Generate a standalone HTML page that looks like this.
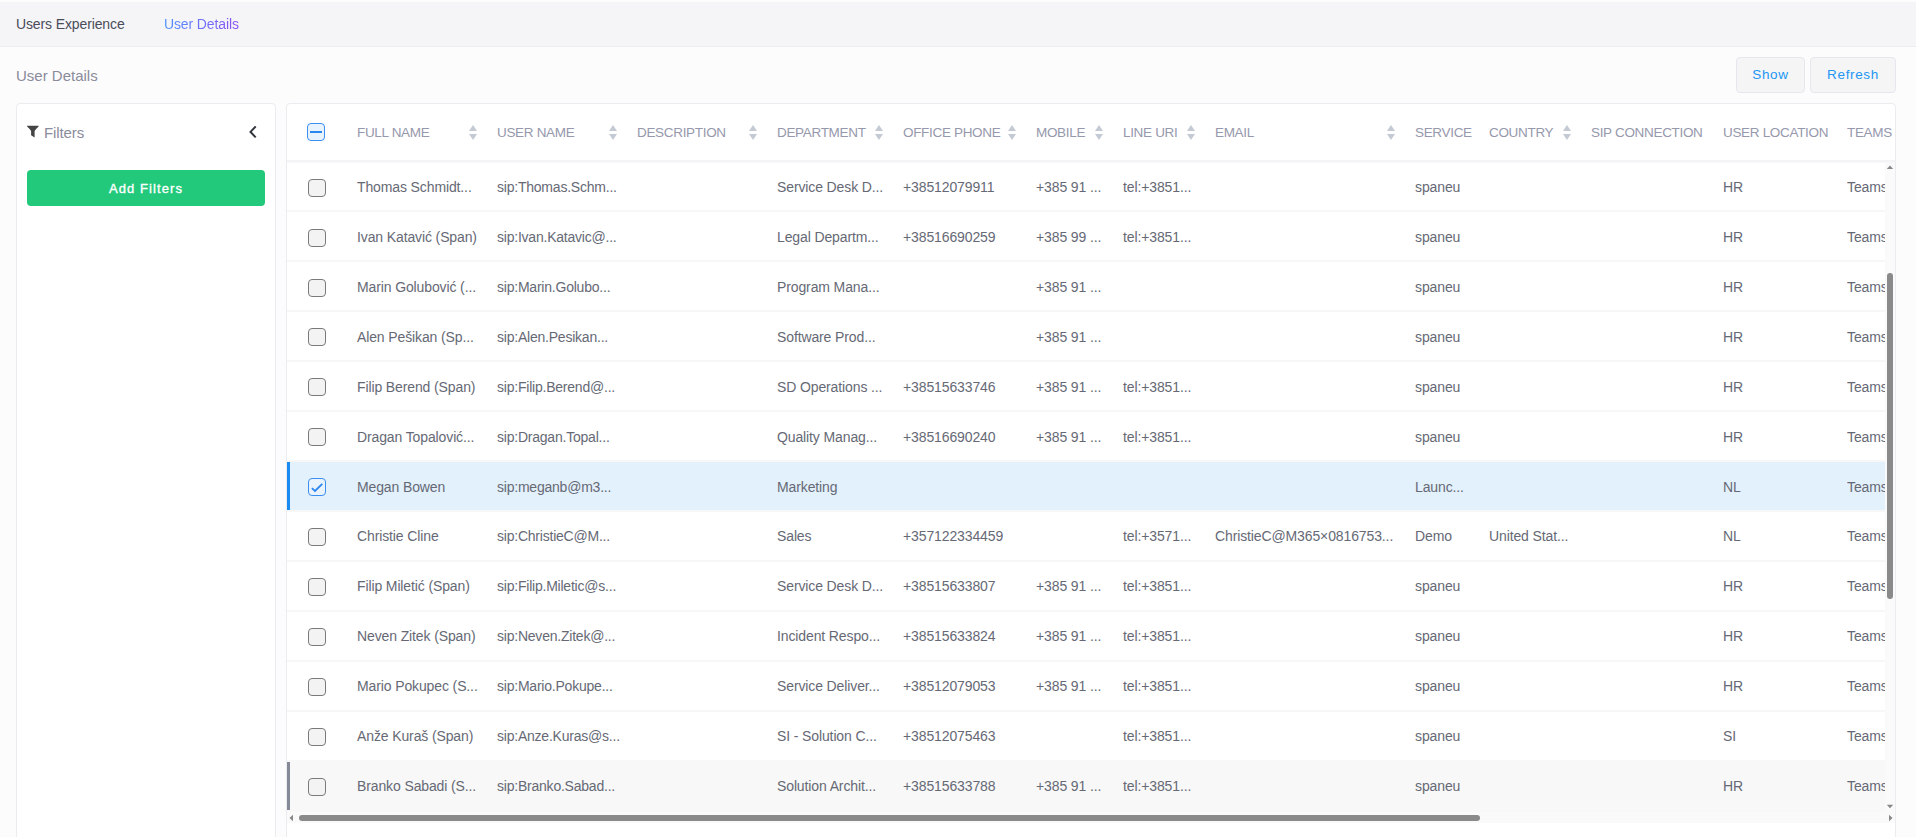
<!DOCTYPE html><html><head><meta charset="utf-8"><style>
*{margin:0;padding:0;box-sizing:border-box}
html,body{width:1916px;height:837px;overflow:hidden;background:#fcfcfd;font-family:"Liberation Sans",sans-serif}
.a{position:absolute;white-space:nowrap}
#top{position:absolute;left:0;top:2px;width:1916px;height:45px;background:#f5f5f8;border-bottom:1px solid #ebebf0}
.tab1{left:16px;top:15px;font-size:14px;letter-spacing:-0.12px;line-height:18px;color:#4a4c59}
.tab2{left:164px;top:15px;font-size:14px;letter-spacing:-0.12px;line-height:18px;background:linear-gradient(90deg,#4d94ff,#8c4ef2);-webkit-background-clip:text;background-clip:text;color:transparent}
.h1{left:16px;top:67px;font-size:15px;line-height:18px;color:#8a8b9b}
.btn{position:absolute;top:57px;height:36px;background:#f5f5f6;border:1px solid #e6e6ee;border-radius:4px;color:#2196f3;font-size:13.5px;letter-spacing:0.65px;text-align:center;line-height:34px}
.panel{position:absolute;background:#fff;border:1px solid #ebebf0;border-radius:4px}
.filt{left:44px;top:124px;font-size:15px;letter-spacing:-0.1px;line-height:18px;color:#8a8b9b}
.add{position:absolute;left:27px;top:170px;width:238px;height:36px;background:#22c97b;border-radius:4px;color:#fff;font-size:13px;letter-spacing:1.1px;-webkit-text-stroke:0.35px #fff;text-align:center;line-height:37px}
.hd{font-size:13.5px;letter-spacing:-0.32px;line-height:18px;color:#9698ac;top:124px}
.cell{font-size:14px;letter-spacing:-0.12px;line-height:20px;color:#666975}
.sort{position:absolute;width:8px;height:15px}
.cb{position:absolute;left:308px;width:18px;height:18px;border:1.5px solid #7a7a7a;border-radius:4px;background:#f3f3f3}
.sep{position:absolute;left:287px;width:1598px;height:2px;background:#f7f7f8}
</style></head><body>
<div id="top"></div>
<div class="a tab1">Users Experience</div>
<div class="a tab2">User Details</div>
<div class="a h1">User Details</div>
<div class="btn" style="left:1736px;width:69px">Show</div>
<div class="btn" style="left:1810px;width:86px">Refresh</div>
<div class="panel" style="left:16px;top:103px;width:260px;height:760px"></div>
<svg class="a" style="left:27px;top:125px" width="12" height="13" viewBox="0 0 12 13"><path d="M0.1 0.8 H11.6 V1.6 Q8.6 4.4 7.6 6 V12.6 L4.1 10.2 V6 Q3.1 4.4 0.1 1.6 Z" fill="#444"/></svg>
<div class="a filt">Filters</div>
<svg class="a" style="left:247px;top:124px" width="12" height="16" viewBox="0 0 12 16"><path d="M8.7 2.4 L3.5 7.9 L8.7 13.4" fill="none" stroke="#30343a" stroke-width="2"/></svg>
<div class="add">Add Filters</div>
<div class="panel" style="left:286px;top:103px;width:1610px;height:760px"></div>
<div class="a" style="left:287px;top:160px;width:1608px;height:2px;background:#f4f4f7"></div><div class="a" style="left:287px;top:162px;width:1608px;height:1px;background:#f8f8f8"></div>
<div class="a" style="left:307px;top:123px;width:18px;height:18px;border:1.5px solid #3b8ff0;border-radius:4px;background:#e8f3fd"></div>
<div class="a" style="left:310px;top:131px;width:12px;height:2px;background:#2b86ee"></div>
<div class="a hd" style="left:357px">FULL NAME</div>
<svg class="a" style="left:469px;top:125px" width="8" height="15" viewBox="0 0 8 15"><path d="M4 0 L8 6 H0 Z M0 9 H8 L4 15 Z" fill="#c4cad3"/></svg>
<div class="a hd" style="left:497px">USER NAME</div>
<svg class="a" style="left:609px;top:125px" width="8" height="15" viewBox="0 0 8 15"><path d="M4 0 L8 6 H0 Z M0 9 H8 L4 15 Z" fill="#c4cad3"/></svg>
<div class="a hd" style="left:637px">DESCRIPTION</div>
<svg class="a" style="left:749px;top:125px" width="8" height="15" viewBox="0 0 8 15"><path d="M4 0 L8 6 H0 Z M0 9 H8 L4 15 Z" fill="#c4cad3"/></svg>
<div class="a hd" style="left:777px">DEPARTMENT</div>
<svg class="a" style="left:875px;top:125px" width="8" height="15" viewBox="0 0 8 15"><path d="M4 0 L8 6 H0 Z M0 9 H8 L4 15 Z" fill="#c4cad3"/></svg>
<div class="a hd" style="left:903px">OFFICE PHONE</div>
<svg class="a" style="left:1008px;top:125px" width="8" height="15" viewBox="0 0 8 15"><path d="M4 0 L8 6 H0 Z M0 9 H8 L4 15 Z" fill="#c4cad3"/></svg>
<div class="a hd" style="left:1036px">MOBILE</div>
<svg class="a" style="left:1095px;top:125px" width="8" height="15" viewBox="0 0 8 15"><path d="M4 0 L8 6 H0 Z M0 9 H8 L4 15 Z" fill="#c4cad3"/></svg>
<div class="a hd" style="left:1123px">LINE URI</div>
<svg class="a" style="left:1187px;top:125px" width="8" height="15" viewBox="0 0 8 15"><path d="M4 0 L8 6 H0 Z M0 9 H8 L4 15 Z" fill="#c4cad3"/></svg>
<div class="a hd" style="left:1215px">EMAIL</div>
<svg class="a" style="left:1387px;top:125px" width="8" height="15" viewBox="0 0 8 15"><path d="M4 0 L8 6 H0 Z M0 9 H8 L4 15 Z" fill="#c4cad3"/></svg>
<div class="a hd" style="left:1415px">SERVICE</div>
<div class="a hd" style="left:1489px">COUNTRY</div>
<svg class="a" style="left:1563px;top:125px" width="8" height="15" viewBox="0 0 8 15"><path d="M4 0 L8 6 H0 Z M0 9 H8 L4 15 Z" fill="#c4cad3"/></svg>
<div class="a hd" style="left:1591px">SIP CONNECTION</div>
<div class="a hd" style="left:1723px">USER LOCATION</div>
<div class="a hd" style="left:1847px">TEAMS</div>
<div class="sep" style="top:210px"></div>
<div class="cb" style="top:179px"></div>
<div class="a cell" style="left:357px;top:177px;">Thomas Schmidt...</div>
<div class="a cell" style="left:497px;top:177px;letter-spacing:-0.22px;">sip:Thomas.Schm...</div>
<div class="a cell" style="left:777px;top:177px;">Service Desk D...</div>
<div class="a cell" style="left:903px;top:177px;">+38512079911</div>
<div class="a cell" style="left:1036px;top:177px;">+385 91 ...</div>
<div class="a cell" style="left:1123px;top:177px;">tel:+3851...</div>
<div class="a cell" style="left:1415px;top:177px;">spaneu</div>
<div class="a cell" style="left:1723px;top:177px;">HR</div>
<div class="a cell" style="left:1847px;top:177px;width:38px;overflow:hidden;">Teams</div>
<div class="sep" style="top:260px"></div>
<div class="cb" style="top:229px"></div>
<div class="a cell" style="left:357px;top:227px;">Ivan Katavić (Span)</div>
<div class="a cell" style="left:497px;top:227px;letter-spacing:-0.22px;">sip:Ivan.Katavic@...</div>
<div class="a cell" style="left:777px;top:227px;">Legal Departm...</div>
<div class="a cell" style="left:903px;top:227px;">+38516690259</div>
<div class="a cell" style="left:1036px;top:227px;">+385 99 ...</div>
<div class="a cell" style="left:1123px;top:227px;">tel:+3851...</div>
<div class="a cell" style="left:1415px;top:227px;">spaneu</div>
<div class="a cell" style="left:1723px;top:227px;">HR</div>
<div class="a cell" style="left:1847px;top:227px;width:38px;overflow:hidden;">Teams</div>
<div class="sep" style="top:310px"></div>
<div class="cb" style="top:279px"></div>
<div class="a cell" style="left:357px;top:277px;">Marin Golubović (...</div>
<div class="a cell" style="left:497px;top:277px;letter-spacing:-0.22px;">sip:Marin.Golubo...</div>
<div class="a cell" style="left:777px;top:277px;">Program Mana...</div>
<div class="a cell" style="left:1036px;top:277px;">+385 91 ...</div>
<div class="a cell" style="left:1415px;top:277px;">spaneu</div>
<div class="a cell" style="left:1723px;top:277px;">HR</div>
<div class="a cell" style="left:1847px;top:277px;width:38px;overflow:hidden;">Teams</div>
<div class="sep" style="top:360px"></div>
<div class="cb" style="top:328px"></div>
<div class="a cell" style="left:357px;top:327px;">Alen Pešikan (Sp...</div>
<div class="a cell" style="left:497px;top:327px;letter-spacing:-0.22px;">sip:Alen.Pesikan...</div>
<div class="a cell" style="left:777px;top:327px;">Software Prod...</div>
<div class="a cell" style="left:1036px;top:327px;">+385 91 ...</div>
<div class="a cell" style="left:1415px;top:327px;">spaneu</div>
<div class="a cell" style="left:1723px;top:327px;">HR</div>
<div class="a cell" style="left:1847px;top:327px;width:38px;overflow:hidden;">Teams</div>
<div class="sep" style="top:410px"></div>
<div class="cb" style="top:378px"></div>
<div class="a cell" style="left:357px;top:377px;">Filip Berend (Span)</div>
<div class="a cell" style="left:497px;top:377px;letter-spacing:-0.22px;">sip:Filip.Berend@...</div>
<div class="a cell" style="left:777px;top:377px;">SD Operations ...</div>
<div class="a cell" style="left:903px;top:377px;">+38515633746</div>
<div class="a cell" style="left:1036px;top:377px;">+385 91 ...</div>
<div class="a cell" style="left:1123px;top:377px;">tel:+3851...</div>
<div class="a cell" style="left:1415px;top:377px;">spaneu</div>
<div class="a cell" style="left:1723px;top:377px;">HR</div>
<div class="a cell" style="left:1847px;top:377px;width:38px;overflow:hidden;">Teams</div>
<div class="sep" style="top:460px"></div>
<div class="cb" style="top:428px"></div>
<div class="a cell" style="left:357px;top:427px;">Dragan Topalović...</div>
<div class="a cell" style="left:497px;top:427px;letter-spacing:-0.22px;">sip:Dragan.Topal...</div>
<div class="a cell" style="left:777px;top:427px;">Quality Manag...</div>
<div class="a cell" style="left:903px;top:427px;">+38516690240</div>
<div class="a cell" style="left:1036px;top:427px;">+385 91 ...</div>
<div class="a cell" style="left:1123px;top:427px;">tel:+3851...</div>
<div class="a cell" style="left:1415px;top:427px;">spaneu</div>
<div class="a cell" style="left:1723px;top:427px;">HR</div>
<div class="a cell" style="left:1847px;top:427px;width:38px;overflow:hidden;">Teams</div>
<div class="a" style="left:287px;top:462px;width:1598px;height:48px;background:#e3f1fc"></div>
<div class="a" style="left:287px;top:462px;width:3px;height:48px;background:#1a8bf0"></div>
<div class="sep" style="top:510px"></div>
<div class="cb" style="top:478px;border-color:#3b8ff0;background:#e8f3fd"></div>
<svg class="a" style="left:308px;top:478px" width="18" height="18" viewBox="0 0 18 18"><path d="M3.9 10.2 L7 13 L14.3 5.8" fill="none" stroke="#2b86ee" stroke-width="1.8"/></svg>
<div class="a cell" style="left:357px;top:477px;">Megan Bowen</div>
<div class="a cell" style="left:497px;top:477px;letter-spacing:-0.22px;">sip:meganb@m3...</div>
<div class="a cell" style="left:777px;top:477px;">Marketing</div>
<div class="a cell" style="left:1415px;top:477px;">Launc...</div>
<div class="a cell" style="left:1723px;top:477px;">NL</div>
<div class="a cell" style="left:1847px;top:477px;width:38px;overflow:hidden;">Teams</div>
<div class="sep" style="top:560px"></div>
<div class="cb" style="top:528px"></div>
<div class="a cell" style="left:357px;top:526px;">Christie Cline</div>
<div class="a cell" style="left:497px;top:526px;letter-spacing:-0.22px;">sip:ChristieC@M...</div>
<div class="a cell" style="left:777px;top:526px;">Sales</div>
<div class="a cell" style="left:903px;top:526px;">+357122334459</div>
<div class="a cell" style="left:1123px;top:526px;">tel:+3571...</div>
<div class="a cell" style="left:1215px;top:526px;">ChristieC@M365×0816753...</div>
<div class="a cell" style="left:1415px;top:526px;">Demo</div>
<div class="a cell" style="left:1489px;top:526px;">United Stat...</div>
<div class="a cell" style="left:1723px;top:526px;">NL</div>
<div class="a cell" style="left:1847px;top:526px;width:38px;overflow:hidden;">Teams</div>
<div class="sep" style="top:610px"></div>
<div class="cb" style="top:578px"></div>
<div class="a cell" style="left:357px;top:576px;">Filip Miletić (Span)</div>
<div class="a cell" style="left:497px;top:576px;letter-spacing:-0.22px;">sip:Filip.Miletic@s...</div>
<div class="a cell" style="left:777px;top:576px;">Service Desk D...</div>
<div class="a cell" style="left:903px;top:576px;">+38515633807</div>
<div class="a cell" style="left:1036px;top:576px;">+385 91 ...</div>
<div class="a cell" style="left:1123px;top:576px;">tel:+3851...</div>
<div class="a cell" style="left:1415px;top:576px;">spaneu</div>
<div class="a cell" style="left:1723px;top:576px;">HR</div>
<div class="a cell" style="left:1847px;top:576px;width:38px;overflow:hidden;">Teams</div>
<div class="sep" style="top:660px"></div>
<div class="cb" style="top:628px"></div>
<div class="a cell" style="left:357px;top:626px;">Neven Zitek (Span)</div>
<div class="a cell" style="left:497px;top:626px;letter-spacing:-0.22px;">sip:Neven.Zitek@...</div>
<div class="a cell" style="left:777px;top:626px;">Incident Respo...</div>
<div class="a cell" style="left:903px;top:626px;">+38515633824</div>
<div class="a cell" style="left:1036px;top:626px;">+385 91 ...</div>
<div class="a cell" style="left:1123px;top:626px;">tel:+3851...</div>
<div class="a cell" style="left:1415px;top:626px;">spaneu</div>
<div class="a cell" style="left:1723px;top:626px;">HR</div>
<div class="a cell" style="left:1847px;top:626px;width:38px;overflow:hidden;">Teams</div>
<div class="sep" style="top:710px"></div>
<div class="cb" style="top:678px"></div>
<div class="a cell" style="left:357px;top:676px;">Mario Pokupec (S...</div>
<div class="a cell" style="left:497px;top:676px;letter-spacing:-0.22px;">sip:Mario.Pokupe...</div>
<div class="a cell" style="left:777px;top:676px;">Service Deliver...</div>
<div class="a cell" style="left:903px;top:676px;">+38512079053</div>
<div class="a cell" style="left:1036px;top:676px;">+385 91 ...</div>
<div class="a cell" style="left:1123px;top:676px;">tel:+3851...</div>
<div class="a cell" style="left:1415px;top:676px;">spaneu</div>
<div class="a cell" style="left:1723px;top:676px;">HR</div>
<div class="a cell" style="left:1847px;top:676px;width:38px;overflow:hidden;">Teams</div>
<div class="sep" style="top:760px"></div>
<div class="cb" style="top:728px"></div>
<div class="a cell" style="left:357px;top:726px;">Anže Kuraš (Span)</div>
<div class="a cell" style="left:497px;top:726px;letter-spacing:-0.22px;">sip:Anze.Kuras@s...</div>
<div class="a cell" style="left:777px;top:726px;">SI - Solution C...</div>
<div class="a cell" style="left:903px;top:726px;">+38512075463</div>
<div class="a cell" style="left:1123px;top:726px;">tel:+3851...</div>
<div class="a cell" style="left:1415px;top:726px;">spaneu</div>
<div class="a cell" style="left:1723px;top:726px;">SI</div>
<div class="a cell" style="left:1847px;top:726px;width:38px;overflow:hidden;">Teams</div>
<div class="a" style="left:287px;top:760px;width:1598px;height:52px;background:#f8f8f8"></div>
<div class="a" style="left:287px;top:762px;width:3px;height:48px;background:#868a96"></div>
<div class="cb" style="top:778px"></div>
<div class="a cell" style="left:357px;top:776px;">Branko Sabadi (S...</div>
<div class="a cell" style="left:497px;top:776px;letter-spacing:-0.22px;">sip:Branko.Sabad...</div>
<div class="a cell" style="left:777px;top:776px;">Solution Archit...</div>
<div class="a cell" style="left:903px;top:776px;">+38515633788</div>
<div class="a cell" style="left:1036px;top:776px;">+385 91 ...</div>
<div class="a cell" style="left:1123px;top:776px;">tel:+3851...</div>
<div class="a cell" style="left:1415px;top:776px;">spaneu</div>
<div class="a cell" style="left:1723px;top:776px;">HR</div>
<div class="a cell" style="left:1847px;top:776px;width:38px;overflow:hidden;">Teams</div>
<div class="a" style="left:1885px;top:163px;width:10px;height:650px;background:#fafafa"></div>
<svg class="a" style="left:1886px;top:165px" width="8" height="5" viewBox="0 0 8 5"><path d="M4 0.5 L7.2 4 H0.8 Z" fill="#888"/></svg>
<svg class="a" style="left:1886px;top:804px" width="8" height="5" viewBox="0 0 8 5"><path d="M0.8 0.8 H7.2 L4 4.3 Z" fill="#888"/></svg>
<div class="a" style="left:1887px;top:273px;width:6px;height:326px;background:#8a8a8a;border-radius:3px"></div>
<div class="a" style="left:287px;top:812px;width:1608px;height:11px;background:#fafafa"></div>
<svg class="a" style="left:289px;top:814px" width="5" height="8" viewBox="0 0 5 8"><path d="M0.5 4 L4 0.8 V7.2 Z" fill="#888"/></svg>
<svg class="a" style="left:1888px;top:814px" width="5" height="8" viewBox="0 0 5 8"><path d="M4.5 4 L1 0.8 V7.2 Z" fill="#888"/></svg>
<div class="a" style="left:299px;top:815px;width:1181px;height:6px;background:#8a8a8a;border-radius:3px"></div>
</body></html>
